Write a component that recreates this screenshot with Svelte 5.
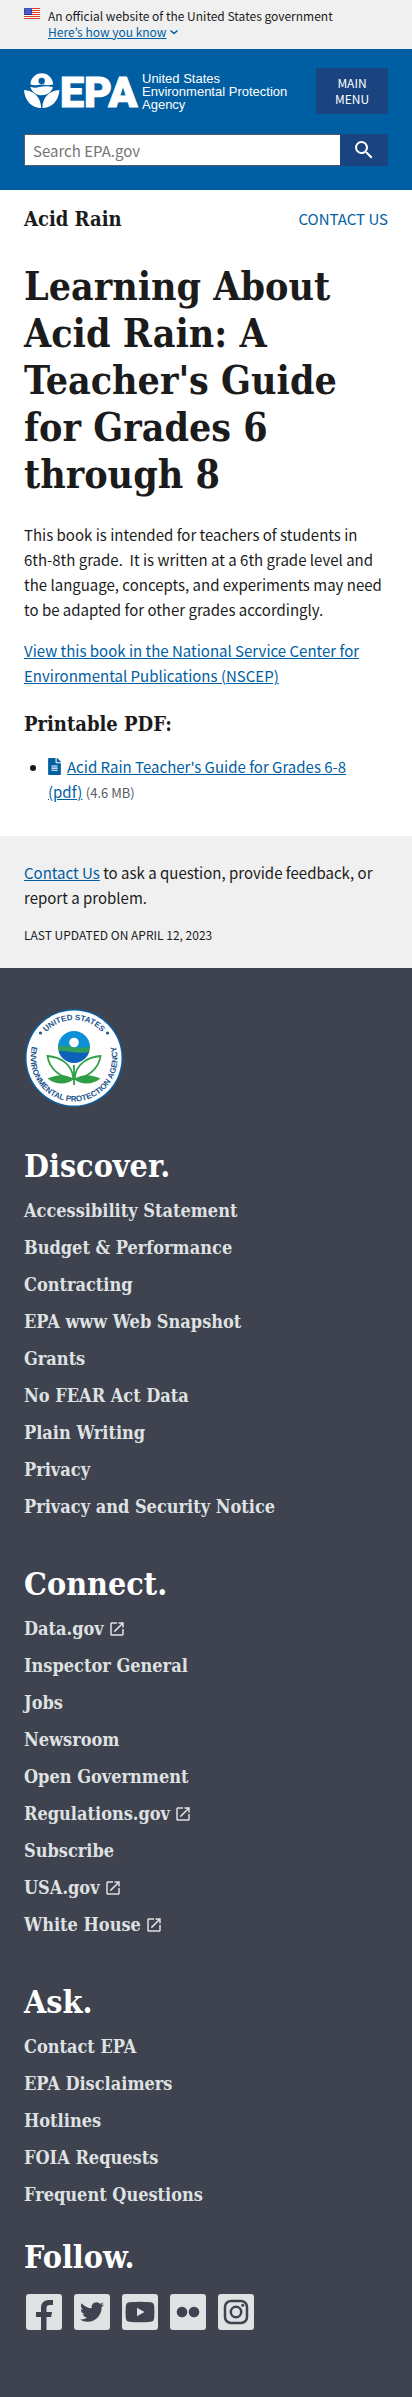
<script>
  const discover = [
    'Accessibility Statement', 'Budget & Performance', 'Contracting', 'EPA www Web Snapshot',
    'Grants', 'No FEAR Act Data', 'Plain Writing', 'Privacy', 'Privacy and Security Notice'
  ].map((label) => ({ label }));
  const connect = [
    { label: 'Data.gov', external: true },
    { label: 'Inspector General' },
    { label: 'Jobs' },
    { label: 'Newsroom' },
    { label: 'Open Government' },
    { label: 'Regulations.gov', external: true },
    { label: 'Subscribe' },
    { label: 'USA.gov', external: true },
    { label: 'White House', external: true }
  ];
  const ask = ['Contact EPA', 'EPA Disclaimers', 'Hotlines', 'FOIA Requests', 'Frequent Questions'].map((label) => ({ label }));
  const menus = [
    { title: 'Discover.', links: discover },
    { title: 'Connect.', links: connect },
    { title: 'Ask.', links: ask }
  ];
  const stars = [[1, 1], [3, 1], [5, 1], [7, 1], [2, 3], [4, 3], [6, 3], [1, 5], [3, 5], [5, 5], [7, 5]];
</script>

<section class="banner" aria-label="Official government website">
  <svg class="flag" viewBox="0 0 16 11" aria-hidden="true">
    <rect width="16" height="11" fill="#fff" />
    {#each [0, 2, 4, 6, 8, 10] as y}
      <rect {y} width="16" height="1" fill="#db3e1f" />
    {/each}
    <rect width="8" height="7" fill="#1e33b1" />
    {#each stars as [cx, cy]}
      <circle {cx} {cy} r="0.5" fill="#fff" />
    {/each}
  </svg>
  <div>
    <p>An official website of the United States government</p>
    <button type="button" class="know"><span>Here’s how you know</span><svg viewBox="0 0 10 10" aria-hidden="true"><path d="M1.5 3.5 5 6.5l3.500-3" fill="none" stroke="currentColor" stroke-width="1.6" /></svg></button>
  </div>
</section>

<header>
  <div class="brand-row">
    <a class="brand" href="#home">
      <svg class="mark" viewBox="0 0 118 36" aria-hidden="true">
        <path d="M6.300 11.300C6.800 5 11.500.3 17.700.3S28.700 5 29.200 11.300c-2.500 1-4.700 1.200-7 .8-3-.8-6-.8-9 0-2.500.5-4.700.2-6.900-.8z" />
        <circle cx="17.700" cy="8" r="3.200" fill="#005ea2" />
        <path d="M6.300 13.700c3.500 1.300 6 1.300 9 .4 4.500-1.300 9-1.200 13.700.2C27.500 19.300 23 22.300 17.700 22.300S7.800 19 6.300 13.700z" />
        <path d="M0 17c9.800.5 16.800 7 17.200 18C8 35 .8 28 0 17zM35.500 17c-9.800.5-16.800 7-17.200 18 9.200 0 16.400-7 17.200-18z" />
        <text x="36" y="34" class="acronym">EPA</text>
      </svg>
      <span>United States<br />Environmental Protection<br />Agency</span>
    </a>
    <button type="button" class="menu">Main Menu</button>
  </div>
  <form class="search" role="search" onsubmit={(e) => e.preventDefault()}>
    <input type="search" placeholder="Search EPA.gov" aria-label="Search EPA.gov" />
    <button type="submit" aria-label="Search">
      <svg viewBox="0 0 24 24" aria-hidden="true"><path d="M15.500 14h-.79l-.28-.27A6.471 6.471 0 0 0 16 9.500 6.500 6.500 0 1 0 9.500 16c1.610 0 3.090-.59 4.230-1.570l.27.28v.79l5 4.990L20.490 19l-4.990-5zm-6 0C7.010 14 5 11.990 5 9.500S7.010 5 9.500 5 14 7.010 14 9.500 11.990 14 9.500 14z" /></svg>
    </button>
  </form>
</header>

<main>
  <div class="area">
    <h2>Acid Rain</h2>
    <a href="#contact">Contact Us</a>
  </div>
  <h1>Learning About Acid Rain: A Teacher's Guide for Grades 6 through 8</h1>
  <p>This book is intended for teachers of students in 6th-8th grade.&nbsp; It is written at a 6th grade level and the language, concepts, and experiments may need to be adapted for other grades accordingly.</p>
  <p><a href="#nscep">View this book in the National Service Center for Environmental Publications (NSCEP)</a></p>
  <h3>Printable PDF:</h3>
  <ul>
    <li>
      <svg class="doc" viewBox="0 0 384 512" aria-hidden="true"><path d="M224 136V0H24C10.700 0 0 10.700 0 24v464c0 13.300 10.700 24 24 24h336c13.300 0 24-10.700 24-24V160H248c-13.200 0-24-10.800-24-24zm64 236c0 6.600-5.400 12-12 12H108c-6.600 0-12-5.400-12-12v-8c0-6.600 5.400-12 12-12h168c6.600 0 12 5.400 12 12v8zm0-64c0 6.600-5.400 12-12 12H108c-6.600 0-12-5.400-12-12v-8c0-6.600 5.400-12 12-12h168c6.600 0 12 5.400 12 12v8zm0-72v8c0 6.600-5.400 12-12 12H108c-6.600 0-12-5.400-12-12v-8c0-6.600 5.400-12 12-12h168c6.600 0 12 5.400 12 12zm96-114.100v6.100H256V0h6.100c6.400 0 12.500 2.500 17 7l97.900 98c4.500 4.500 7 10.600 7 16.900z" /></svg><a href="#pdf">Acid Rain Teacher's Guide for Grades 6-8 (pdf)</a> <small>(4.6 MB)</small>
    </li>
  </ul>
</main>

<section class="feedback">
  <p><a href="#contact">Contact Us</a> to ask a question, provide feedback, or report a problem.</p>
  <p class="updated">Last updated on April 12, 2023</p>
</section>

<footer>
  <svg class="seal" viewBox="0 0 100 100" role="img" aria-label="U.S. EPA seal">
    <defs>
      <path id="arc-top" d="M12 50a38 38 0 0 1 76 0" />
      <path id="arc-bottom" d="M11.600 29.600a43.500 43.500 0 1 0 76.800 0" />
      <clipPath id="globe"><circle cx="50" cy="39" r="16" /></clipPath>
    </defs>
    <circle cx="50" cy="50" r="49" fill="#0e5e9e" />
    <circle cx="50" cy="50" r="47.500" fill="#fff" />
    <text class="ring" text-anchor="middle"><textPath href="#arc-top" startOffset="50%">UNITED STATES</textPath></text>
    <text class="ring" text-anchor="middle"><textPath href="#arc-bottom" startOffset="50%">ENVIRONMENTAL PROTECTION AGENCY</textPath></text>
    <circle cx="16.500" cy="25" r="1.600" fill="#1b5590" />
    <circle cx="83.500" cy="25" r="1.600" fill="#1b5590" />
    <g clip-path="url(#globe)">
      <path fill="#0c90d8" d="M30 20h40v20H30z" />
      <path fill="#31a05f" d="M30 39q9-2 18 0t22-1v7H30z" />
      <path fill="#0c62b8" d="M30 44q9-2 18 0t22-1v14H30z" />
      <circle cx="50" cy="34.500" r="4.800" fill="#fff" />
    </g>
    <g fill="#fff" stroke="#2f9e44" stroke-width="1.800">
      <path d="M49.500 71C36 70 25 60 23.500 48c12 1 24.500 7 26 23z" />
      <path d="M50.500 71C64 70 75 60 76.500 48c-12 1-24.500 7-26 23z" />
    </g>
    <path fill="#2f9e44" d="M49.500 71.500c-7-6-17-5-26-1 8 6.500 19 6.500 26 1zM50.500 71.500c7-6 17-5 26-1-8 6.500-19 6.500-26 1z" />
    <path stroke="#2f9e44" stroke-width="1.800" d="M50 57v20" />
  </svg>

  {#each menus as menu}
    <nav aria-label={menu.title}>
      <h2>{menu.title}</h2>
      <ul>
        {#each menu.links as link}
          <li>
            <a href="#link">{link.label}{#if link.external}<svg viewBox="0 0 24 24" aria-hidden="true"><path d="M19 19H5V5h7V3H5c-1.110 0-2 .9-2 2v14c0 1.100.89 2 2 2h14c1.100 0 2-.9 2-2v-7h-2v7zM14 3v2h3.590l-9.830 9.830 1.410 1.410L19 6.410V10h2V3h-7z" /></svg>{/if}</a>
          </li>
        {/each}
      </ul>
    </nav>
  {/each}

  <section class="follow">
    <h2>Follow.</h2>
    <div class="social">
      <a href="#facebook" aria-label="Facebook"><svg viewBox="0 0 36 36"><rect width="36" height="36" rx="3" /><path class="cut" d="M15 36V23h-5v-5h5v-4c0-5 3-8 8-8h4v5h-3c-2.500 0-3.500 1-3.500 3.200V18H26l-.8 5h-4.700v13z" /></svg></a>
      <a href="#twitter" aria-label="Twitter"><svg viewBox="0 0 36 36"><rect width="36" height="36" rx="3" /><path class="cut" transform="translate(6 6)" d="M23.953 4.570a10 10 0 01-2.825.775 4.958 4.958 0 002.163-2.723c-.951.555-2.005.959-3.127 1.184a4.920 4.920 0 00-8.384 4.482C7.690 8.095 4.067 6.130 1.640 3.162a4.822 4.822 0 00-.666 2.475c0 1.710.87 3.213 2.188 4.096a4.904 4.904 0 01-2.228-.616v.06a4.923 4.923 0 003.946 4.827 4.996 4.996 0 01-2.212.085 4.936 4.936 0 004.604 3.417 9.867 9.867 0 01-6.102 2.105c-.39 0-.779-.023-1.170-.067a13.995 13.995 0 007.557 2.209c9.053 0 13.998-7.496 13.998-13.985 0-.21 0-.42-.015-.63A9.935 9.935 0 0024 4.590z" /></svg></a>
      <a href="#youtube" aria-label="YouTube"><svg viewBox="0 0 36 36"><rect width="36" height="36" rx="3" /><path class="cut" d="M7 8.300q11-1 22 0 2.800.3 3.100 3 .7 6.700 0 13.400-.3 2.700-3.100 3-11 1-22 0-2.800-.3-3.100-3-.7-6.700 0-13.400.3-2.700 3.100-3z" /><path d="m15 13.800 7.500 4.200-7.500 4.200z" /></svg></a>
      <a href="#flickr" aria-label="Flickr"><svg viewBox="0 0 36 36"><rect width="36" height="36" rx="3" /><circle class="cut" cx="12" cy="18" r="5.300" /><circle class="cut" cx="24" cy="18" r="5.300" /></svg></a>
      <a href="#instagram" aria-label="Instagram"><svg viewBox="0 0 36 36"><rect width="36" height="36" rx="3" /><g class="line"><rect x="7" y="7" width="22" height="22" rx="6" /><circle cx="18" cy="18" r="5.200" /></g><circle class="cut" cx="24.700" cy="11.300" r="1.500" /></svg></a>
    </div>
  </section>
</footer>

<style>
  :global(body) { margin: 0; background: #fff; }
  :global(#app) {
    color: #1b1b1b;
    font: 15px/25px "Noto Sans CJK KR", "Noto Sans", sans-serif;
  }
  h1, h2, h3, p, ul { margin: 0; padding: 0; }
  h1, h2, h3, nav { font-family: "DejaVu Serif Condensed", "DejaVu Serif", serif; font-weight: 700; }
  a { color: #005ea2; }
  button { border: 0; font: inherit; cursor: pointer; }

  .banner { display: flex; gap: 8px; padding: 8px 24px 9px; background: #f0f0f0; font-size: 12px; line-height: 16px; }
  .flag { flex: none; width: 16px; height: 11px; }
  .know { display: flex; align-items: center; gap: 3px; padding: 0; background: none; color: #005ea2; line-height: 16px; }
  .know span { text-decoration: underline; }
  .know svg { width: 10px; height: 10px; }

  header { padding: 19px 24px 24px; background: #005ea2; color: #fff; }
  .brand-row { display: flex; align-items: center; justify-content: space-between; }
  .brand { display: flex; align-items: center; color: #fff; text-decoration: none; font: 13px/13px "Liberation Sans", Arial, sans-serif; white-space: nowrap; }
  .mark { flex: none; width: 118px; height: 36px; overflow: visible; fill: #fff; }
  .acronym { font: 900 43px Roboto, sans-serif; stroke: #fff; stroke-width: 1px; }
  .menu { flex: none; width: 72px; padding: 7px 16px; background: #1a4480; color: #fff; font-size: 12px; line-height: 16px; text-transform: uppercase; }
  .search { display: flex; margin-top: 20px; }
  .search input { flex: 1; min-width: 0; height: 32px; box-sizing: border-box; padding: 0 8px; border: 1px solid #565c65; border-right: 0; border-radius: 0; background: #fff; font: inherit; appearance: none; }
  .search input::placeholder { color: #757575; opacity: 1; }
  .search button { display: grid; place-items: center; width: 48px; padding: 0; background: #1a4480; }
  .search svg { width: 24px; height: 24px; fill: #fff; }

  main { padding: 16px 24px 32px; }
  .area { display: flex; align-items: center; justify-content: space-between; }
  .area h2, h3 { font-size: 20px; line-height: 24px; }
  .area a { text-transform: uppercase; text-decoration: none; }
  h1 { margin: 32px 0 24px; font-size: 39px; line-height: 47px; }
  main p { margin-bottom: 16px; }
  h3 { margin: 24px 0 18px; }
  main ul { padding: 0 24px; }
  .doc { width: 13px; height: 17px; margin-right: 6px; vertical-align: -2px; fill: #005ea2; }
  small { color: #565c65; font-size: 13px; line-height: 16px; }

  .feedback { padding: 24px 24px 21px; background: #f0f0f0; }
  .feedback .updated { margin-top: 12px; font-size: 12px; text-transform: uppercase; }

  footer { padding: 40px 24px 67px; background: #3e434f; color: #fff; }
  .seal { display: block; width: 100px; height: 100px; margin-bottom: 40px; }
  .ring { fill: #1b5590; font: 700 8px "Liberation Sans", Arial, sans-serif; }
  footer h2 { font-size: 32px; line-height: 36px; }
  footer ul { display: grid; gap: 12px; margin-top: 14px; list-style: none; }
  nav + nav { margin-top: 47px; }
  nav li, nav a { display: flex; align-items: center; }
  nav a { color: #dfe1e2; font-size: 18px; text-decoration: none; }
  nav svg { width: 18px; height: 18px; margin-left: 4px; fill: #dfe1e2; }
  .follow { margin-top: 32px; }
  .social { display: flex; gap: 12px; margin: 19px 0 0 2px; }
  .social svg { display: block; width: 36px; height: 36px; fill: #dfe1e2; }
  .social .cut { fill: #3e434f; }
  .line { fill: none; stroke: #3e434f; stroke-width: 2.500; }
</style>
